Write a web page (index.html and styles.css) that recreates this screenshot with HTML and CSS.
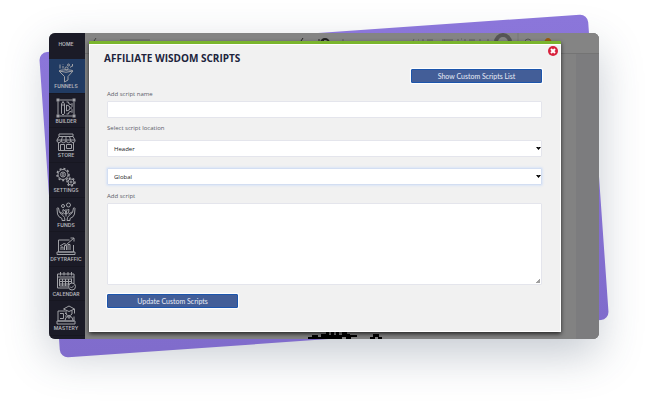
FILE: index.html
```html
<!DOCTYPE html>
<html lang="en">
<head>
<meta charset="utf-8">
<meta name="viewport" content="width=device-width, initial-scale=1">
<title>Affiliate Wisdom Scripts</title>
<link rel="stylesheet" href="styles.css">
</head>
<body>
<main class="stage">
  <div class="frame">
    <div class="window">
      <nav class="sidebar" aria-label="Main">
        <a class="home" href="#">HOME</a>
        <a class="item active" href="#">
          <svg class="icon" viewBox="0 0 40 40"><path d="M6 16c0-3 28-3 28 0L24 27v7l-7 4V27L6 16q14 5 28 0M8 3v8M14 6v5M14 2v1M28 9l4-3M33 2v5"/><circle cx="21" cy="11" r="3"/><circle cx="25" cy="4" r="2"/></svg>
          <span>FUNNELS</span>
        </a>
        <a class="item" href="#">
          <svg class="icon" viewBox="0 0 40 40"><path d="M4 7v26M36 7v26M7 4h26M7 36h26M11 31V12l3-5 3 5v19l-3 3zM11 14h6M21 8h4l1 4 4 1 2-2M21 32h4l1-4 4-1 2 2M32 11v6l-3 3 3 3v6M21 14q7 1 7 6t-7 6z"/><path class="solid" d="M1 1h6v6H1zM33 1h6v6h-6zM1 33h6v6H1zM33 33h6v6h-6z"/></svg>
          <span>BUILDER</span>
        </a>
        <a class="item" href="#">
          <svg class="icon" viewBox="0 0 40 40"><path d="M6 4h28v5H6zM6 9l-4 7v3q4 5 8 0q5 5 10 0q5 5 10 0q4 5 8 0v-3l-4-7M2 16h36M13 9l-3 10M20 9v10M27 9l3 10M5 22v15h30V22M9 37V25h8v12M21 25h10v8H21z"/></svg>
          <span>STORE</span>
        </a>
        <a class="item" href="#">
          <svg class="icon" viewBox="0 0 40 40"><circle cx="14" cy="15" r="10"/><circle class="teeth" cx="14" cy="15" r="12"/><circle cx="14" cy="15" r="5"/><circle cx="14" cy="15" r="2"/><circle cx="30" cy="30" r="6"/><circle class="teeth" cx="30" cy="30" r="8"/><circle cx="30" cy="30" r="2"/></svg>
          <span>SETTINGS</span>
        </a>
        <a class="item" href="#">
          <svg class="icon" viewBox="0 0 40 40"><path d="M2 13q0-2 3-1l2 9 7 6q4 3 4 10h-6v-4q-8-3-9-9zM38 13q0-2-3-1l-2 9-7 6q-4 3-4 10h6v-4q8-3 9-9zM8 20l7 4M32 20l-7 4M20 29V14M20 24q-8-1-6-9q6 1 6 9q0-9 6-9q1 8-6 9"/><circle cx="14" cy="8" r="3"/><circle cx="25" cy="6" r="4"/></svg>
          <span>FUNDS</span>
        </a>
        <a class="item" href="#">
          <svg class="icon" viewBox="0 0 40 40"><path d="M27 8H5v24h30V18M2 32h36v5H2zM10 28v-6h4v6M17 28v-9h4v9M24 28V17h4v11M8 20l8-5 5 2L36 4M29 4h7v7"/></svg>
          <span>DFYTRAFFIC</span>
        </a>
        <a class="item" href="#">
          <svg class="icon" viewBox="0 0 40 40"><path d="M25 34H3V6h33v18M3 12h33M9 2v7M16 2v7M24 2v7M31 2v7M7 16h25M7 21h25M7 26h20M7 30h18M7 16v14M13 16v14M19 16v14M25 16v12M31 16v8M28 31l3 3 5-5"/><circle cx="32" cy="31" r="7"/></svg>
          <span>CALENDAR</span>
        </a>
        <a class="item" href="#">
          <svg class="icon" viewBox="0 0 40 40"><path d="M18 12H4v20h32v-9M2 32h36v6H2zM8 17h7v10H8M18 17h3M18 22h3M15 8l11-6 11 6-11 5zM20 11v7q6 7 12 0v-7M37 8v9M18 31q0-8 8-9q8 1 8 9M23 23l3 4 3-4"/></svg>
          <span>MASTERY</span>
        </a>
      </nav>

      <div class="page">
        <div class="backdrop" aria-hidden="true">
          <div class="topbar">
            <svg class="marks" viewBox="0 0 514 20"><path d="M9 8l2-3" stroke="#444"/><path d="M35 7h30" stroke="#737373" stroke-width="2"/><path d="M216 8l2-3M234 8V6M238 9l1-3" stroke="#222"/><circle cx="240" cy="10" r="4" stroke="#222" stroke-width="2"/><path d="M257 7h2M328 8l1-2M333 7h1M338 8V6M342 7h6M357 7h3M359 7h9M372 7h2M376 6h1M380 6v2M384 7h6M394 7h2M403 6v2" stroke="#606060"/><circle cx="418" cy="9" r="7" stroke="#555" stroke-width="4"/><path d="M433 0v20" stroke="#777"/><circle cx="443" cy="9" r="3" stroke="#555"/><path d="M459 10q1-5 4-5t4 5z" fill="#9a5a10"/></svg>
          </div>
          <div class="gutter"></div>
          <svg class="scribble" viewBox="0 0 75 8"><path d="M0 8V6h4V4h6v2h3V3h5V1h3v3h2V0h3v4h2V0h3v4h3V1h5v2h3v1h7v2h-6v2h-5V6h-4v2zM62 8V6h3V3h6v3h3v2h-4V6h-3v2z"/></svg>
        </div>

        <section class="modal" role="dialog" aria-labelledby="title">
          <button class="close" type="button" aria-label="Close"><svg viewBox="0 0 10 10"><circle cx="5" cy="5" r="5"/><path d="M3 3l4 4M7 3l-4 4"/></svg></button>
          <h1 id="title">AFFILIATE WISDOM SCRIPTS</h1>
          <form class="form">
            <button class="btn end" type="button">Show Custom Scripts List</button>
            <div class="field">
              <label for="name">Add script name</label>
              <input id="name" type="text">
            </div>
            <div class="field location">
              <label for="place">Select script location</label>
              <div class="pick">
                <select id="place"><option>Header</option><option>Footer</option></select>
                <svg viewBox="0 0 5 4"><path d="M0 1h2l.5.5L3 1h2L2.500 4z"/></svg>
              </div>
              <div class="pick focus">
                <select aria-label="Scope"><option>Global</option></select>
                <svg viewBox="0 0 5 4"><path d="M0 1h2l.5.5L3 1h2L2.500 4z"/></svg>
              </div>
            </div>
            <div class="field">
              <label for="script">Add script</label>
              <textarea id="script"></textarea>
            </div>
            <button class="btn" type="button">Update Custom Scripts</button>
          </form>
        </section>
      </div>
    </div>
  </div>
</main>
</body>
</html>
```
FILE: styles.css
```css
* { box-sizing: border-box; }

body {
  margin: 0;
  background: #fff;
  font-family: "Open Sans", sans-serif;
  font-size: 6px;
  line-height: 8px;
}

.stage { padding: 33px 50px 65px 49px; }

.frame { position: relative; }

.frame::before {
  content: "";
  position: absolute;
  inset: 0;
  border-radius: 8px;
  background: linear-gradient(#8b76da, #806ccc);
  transform: rotate(-4deg);
}

.frame::after {
  content: "";
  position: absolute;
  inset: 0;
  z-index: -1;
  border-radius: 8px;
  box-shadow: 0 16px 44px rgba(50, 70, 95, 0.28);
}

.window {
  position: relative;
  display: grid;
  grid-template-columns: 36px 1fr;
  border-radius: 6px;
  overflow: hidden;
  background: #818181;
}

.sidebar {
  display: flex;
  flex-direction: column;
  padding-bottom: 3px;
  background: #1b1b27;
}

.sidebar a {
  color: #b4b5bb;
  font-family: Inter, "Open Sans", sans-serif;
  font-size: 5px;
  font-weight: 600;
  line-height: 7px;
  text-align: center;
  text-decoration: none;
}

.sidebar .home { height: 26px; padding: 8px 2px 0 0; }

.item {
  flex: 1;
  display: flex;
  flex-direction: column;
  align-items: center;
  padding: 4px 2px 0 0;
  border-bottom: 1px solid #171721;
}

.item.active { background: #213b63; }

.icon {
  width: 20px;
  height: 20px;
  fill: none;
  stroke: #a0a1a6;
  stroke-width: 2;
}

.icon .solid { fill: #a0a1a6; stroke: none; }
.icon .teeth { stroke-width: 3; stroke-dasharray: 4 4; }

.page {
  position: relative;
  padding: 8px 38px 7px 4px;
}

.backdrop { position: absolute; inset: 0; background: #828282; }

.topbar {
  height: 21px;
  background: #848484;
  border-bottom: 1px solid #747474;
}

.marks { display: block; width: 514px; height: 20px; fill: none; }

.gutter {
  position: absolute;
  inset: 21px 0 0 auto;
  width: 23px;
  background: #7c7c7e;
}

.scribble {
  position: absolute;
  bottom: 0;
  left: 223px;
  width: 75px;
  height: 8px;
}

.modal {
  position: relative;
  padding: 8px 19px 24px 15px;
  border-top: 3px solid #7ab52d;
  border-radius: 1px;
  background: #f1f1f1;
  box-shadow: inset 0 1px #fff, inset 0 -1px #fff, inset 1px 0 #fff, inset -1px 0 #fff, 0 2px 4px rgba(0, 0, 0, 0.7);
}

.modal h1 {
  margin: 0;
  color: #20233c;
  font-size: 10px;
  font-weight: 700;
  line-height: 12px;
}

.close {
  position: absolute;
  top: 2px;
  right: 3px;
  width: 10px;
  height: 10px;
  padding: 0;
  border: 0;
  background: none;
}

.close svg { display: block; fill: #d8213c; stroke: #fff; stroke-width: 2; }
.close circle { stroke: none; }

.form {
  display: flex;
  flex-direction: column;
  padding: 5px 0 0 3px;
}

.btn {
  width: 131px;
  height: 14px;
  padding: 0;
  border: 1px solid #1c55ac;
  border-radius: 1px;
  background: #435e98;
  box-shadow: 0 0 1px 1px #fff;
  color: #e8ecf6;
  font: 7px/8px Lato, "Open Sans", sans-serif;
}

.btn.end { align-self: flex-end; margin-bottom: 7px; }

.field { display: flex; flex-direction: column; }

.field label { margin-bottom: 3px; color: #5a5c68; font-size: 6px; }

.field input,
.field select,
.field textarea {
  display: block;
  width: 100%;
  height: 17px;
  margin: 0;
  padding: 0 6px;
  border: 1px solid #e4e5ec;
  border-radius: 1px;
  background: #fff;
  color: #222;
  font: 6px/8px "Open Sans", sans-serif;
  outline: none;
}

.field input { margin-bottom: 6px; }

.field textarea { height: 82px; margin-bottom: 9px; resize: vertical; }

.field textarea::-webkit-resizer {
  background: linear-gradient(135deg, transparent 50%, #a0a0a0 50%) right 1px bottom 1px / 4px 4px no-repeat;
}

.location label { margin-bottom: 8px; }

.pick { position: relative; margin-bottom: 11px; }
.pick select { appearance: none; }
.pick svg {
  position: absolute;
  top: 6px;
  right: 1px;
  width: 5px;
  height: 4px;
  fill: #000;
}

.pick.focus { margin-bottom: 7px; }
.pick.focus select { border-color: #d3def2; box-shadow: 0 0 2px 1px #dbe5f6; }
```
